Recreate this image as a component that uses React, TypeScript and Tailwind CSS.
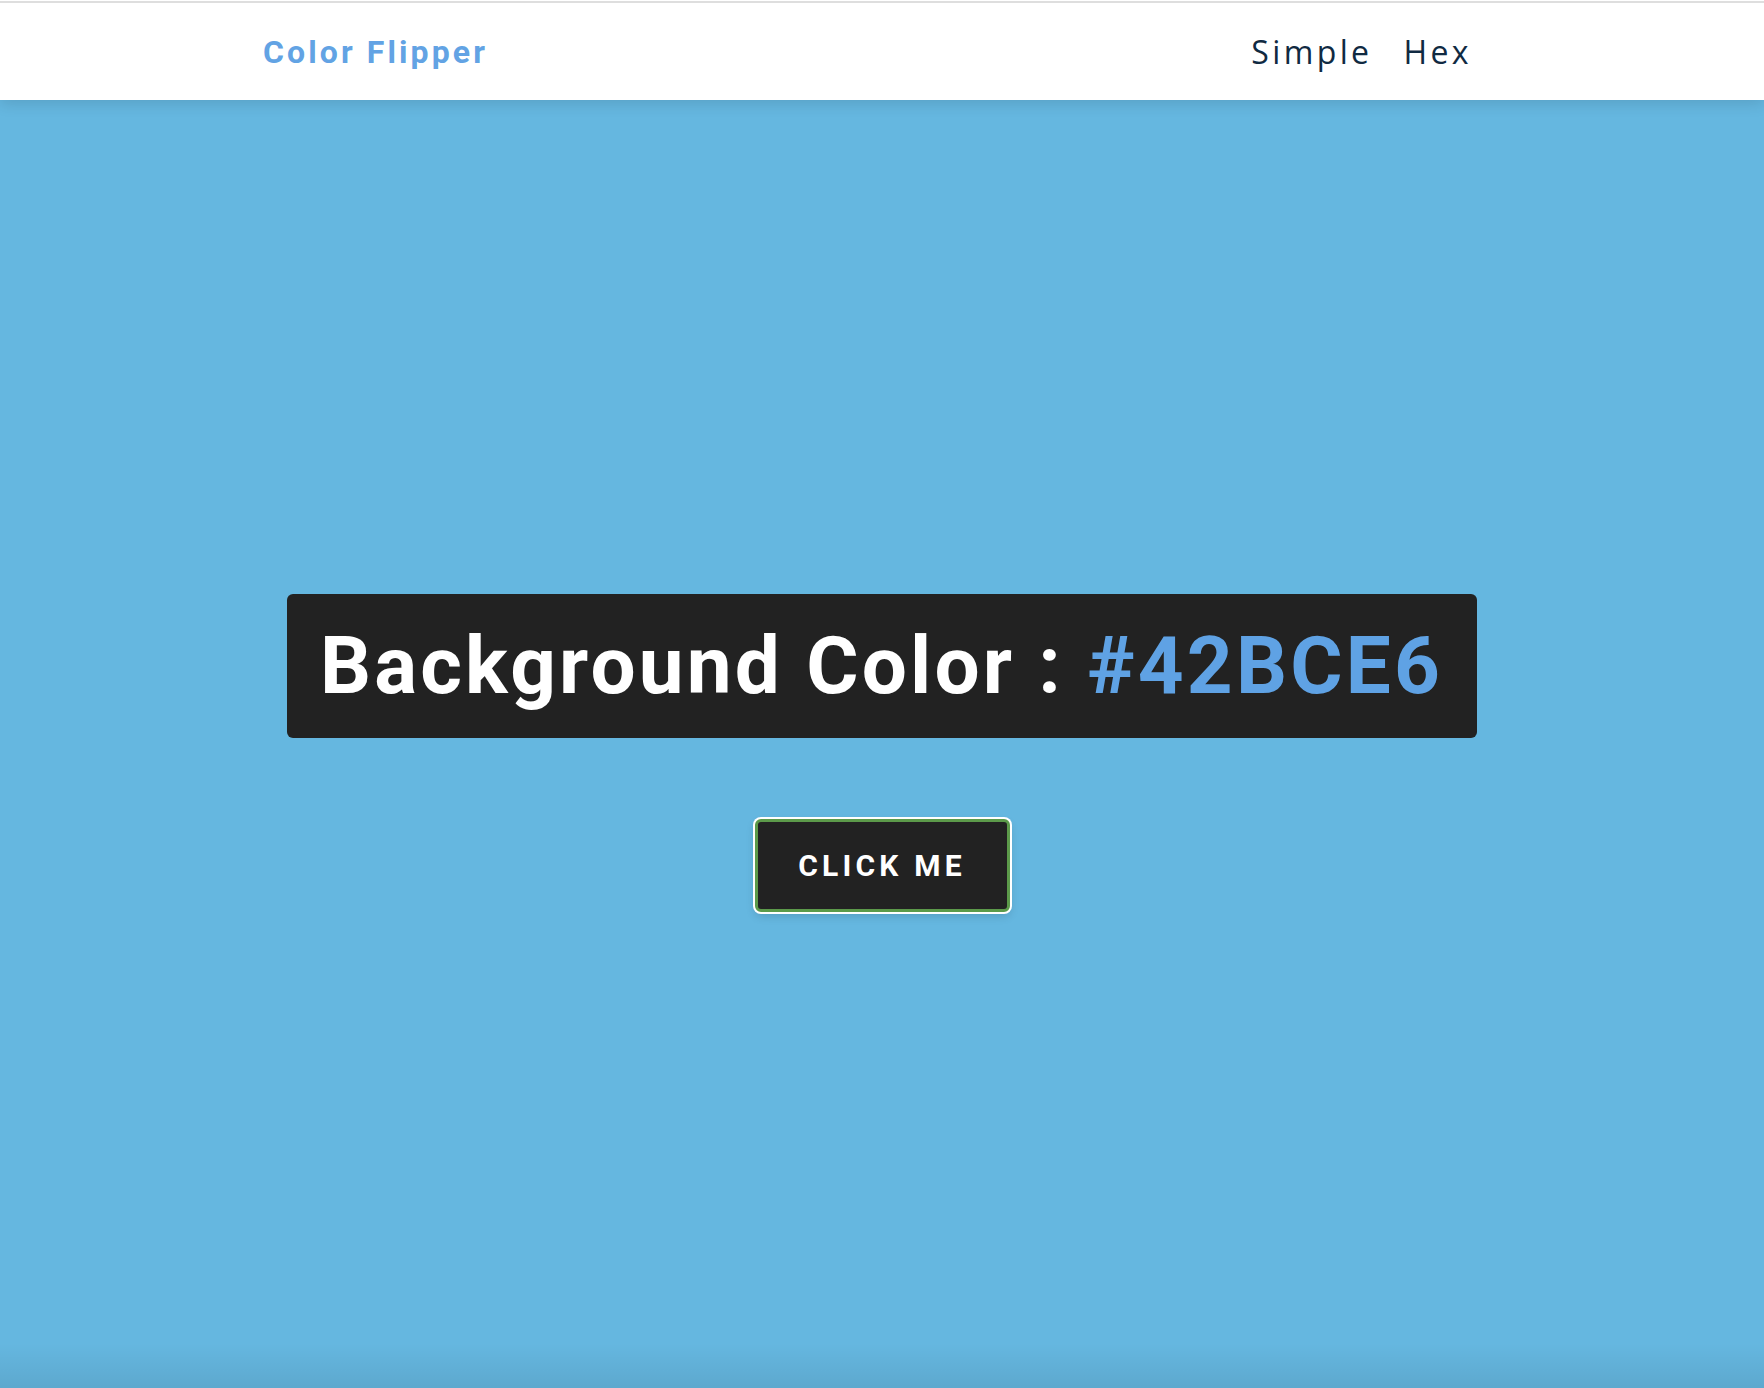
import React, { useState } from "react";

const HEX = ["0", "1", "2", "3", "4", "5", "6", "7", "8", "9", "A", "B", "C", "D", "E", "F"];

function randomHex() {
  let out = "#";
  for (let i = 0; i < 6; i++) out += HEX[Math.floor(Math.random() * HEX.length)];
  return out;
}

const Navbar: React.FC = () => (
  <header className="relative z-10 bg-white pt-px shadow-[0_4px_14px_rgba(0,0,0,0.12)]">
    <div className="h-[2px] bg-[#dedede]" />
    <nav className="h-[97px] flex items-center justify-between pl-[263px] pr-[292px]">
      <h4 className="text-[32px] font-bold tracking-[3.1px] text-[#62a3e4] font-['Roboto',sans-serif]">Color Flipper</h4>
      <ul className="flex items-center gap-[31px] font-['Open_Sans',sans-serif] text-[32px] tracking-[3.4px] text-[#102a42]">
        <li><a href="#">Simple</a></li>
        <li><a href="#">Hex</a></li>
      </ul>
    </nav>
  </header>
);

export default function App() {
  const [color, setColor] = useState("#42BCE6");

  return (
    <div className="relative h-[1388px] flex flex-col bg-[#65b7e0] overflow-hidden">
      <Navbar />
      <main className="flex-1 flex flex-col items-center justify-center pt-[17px]">
        <h2 className="bg-[#222222] rounded-[6px] pl-[33px] pr-[34px] py-[22px] text-[80px] leading-[100px] font-bold tracking-[3.2px] text-white font-['Roboto',sans-serif]">
          Background Color : <span className="text-[#5fa2e4]">{color}</span>
        </h2>
        <button
          type="button"
          onClick={() => setColor(randomHex())}
          className="mt-[81px] w-[255px] h-[93px] rounded-[6px] bg-[#222222] border-[3px] border-[#5c9a4a] ring-2 ring-white shadow-[0_4px_10px_rgba(0,0,0,0.15)] text-white text-[30px] font-bold tracking-[4.2px] font-['Roboto',sans-serif]"
        >
          CLICK ME
        </button>
      </main>
      <div className="absolute bottom-0 left-0 right-0 h-[45px] bg-gradient-to-b from-transparent to-black/8 pointer-events-none" />
    </div>
  );
}
